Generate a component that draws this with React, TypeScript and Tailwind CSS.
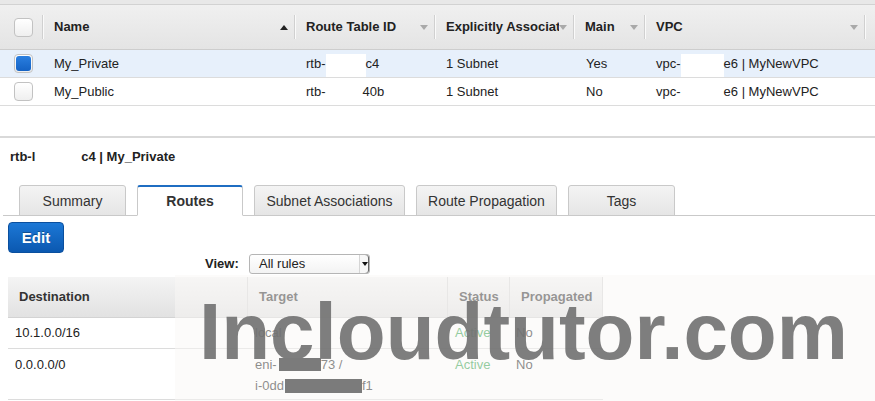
import React from 'react'

function Caret({ up = false }: { up?: boolean }) {
  return (
    <svg width="8" height="5" viewBox="0 0 8 5" className="shrink-0">
      <path d={up ? 'M0 5 L4 0 L8 5 Z' : 'M0 0 L8 0 L4 5 Z'} fill={up ? '#222222' : '#a9a9a9'} />
    </svg>
  )
}

function Checkbox({ checked = false }: { checked?: boolean }) {
  return (
    <span className="flex items-center justify-center w-[19px] h-[19px] rounded-[4px] border border-[#c2c2c2] bg-gradient-to-b from-white to-[#efefef]">
      {checked && <span className="w-[15px] h-[15px] rounded-[3px] bg-gradient-to-b from-[#2a7fe0] to-[#1462c4]" />}
    </span>
  )
}

const headCols = [
  { label: 'Name', w: 'w-[252px]', up: true },
  { label: 'Route Table ID', w: 'w-[140px]' },
  { label: 'Explicitly Associated With', w: 'w-[139px]' },
  { label: 'Main', w: 'w-[71px]' },
  { label: 'VPC', w: 'w-[220px]' },
]

function HeadCell({ label, w, up }: { label: string; w: string; up?: boolean }) {
  return (
    <div className={`${w} h-full flex items-center shrink-0`}>
      <span className="flex-1 min-w-0 pl-[11px] overflow-hidden whitespace-nowrap font-bold text-[#222]">{label}</span>
      <span className="mr-[6px] flex"><Caret up={up} /></span>
      <span className="w-px h-[24px] bg-[#d0d0d0] shadow-[1px_0_0_#fafafa]" />
    </div>
  )
}

function Redact({ w }: { w: string }) {
  return <span className={`${w} self-end h-[23px] bg-white`} />
}

function RtRow({ checked, name, id, main }: { checked?: boolean; name: string; id: string; main: string }) {
  return (
    <div className={`flex items-center h-[28px] border-b border-[#dcdcdc] ${checked ? 'bg-[#e7f0fb]' : 'bg-white'}`}>
      <div className="w-[43px] pl-[14px] flex items-center"><Checkbox checked={checked} /></div>
      <div className="w-[252px] pl-[11px]">{name}</div>
      <div className="w-[140px] pl-[11px] h-full flex items-center">
        <span>rtb-</span>
        <Redact w={checked ? 'w-[40px]' : 'w-[37px]'} />
        <span>{id}</span>
      </div>
      <div className="w-[139px] pl-[11px]">1 Subnet</div>
      <div className="w-[71px] pl-[12px]">{main}</div>
      <div className="w-[220px] pl-[11px] h-full flex items-center">
        <span>vpc-</span>
        <Redact w="w-[43px]" />
        <span>e6 | MyNewVPC</span>
      </div>
    </div>
  )
}

const tabs = [
  { label: 'Summary', w: 'w-[107px]' },
  { label: 'Routes', w: 'w-[106px]', active: true },
  { label: 'Subnet Associations', w: 'w-[151px]' },
  { label: 'Route Propagation', w: 'w-[141px]' },
  { label: 'Tags', w: 'w-[107px]' },
]

export default function App() {
  return (
    <div className="relative h-[401px] w-[875px] overflow-hidden bg-white text-[13px] leading-[16px] text-[#222] font-['Liberation_Sans',Arial,Helvetica,sans-serif]">
      {/* route tables list */}
      <div className="h-[5px] bg-[#e8e8e8] border-b border-[#d2d2d2]" />
      <div className="flex items-center h-[45px] bg-gradient-to-b from-[#f0f0f0] to-[#e4e4e4] border-b border-[#cdcdcd]">
        <div className="w-[43px] h-full flex items-center shrink-0">
          <span className="ml-[14px] flex-1 flex"><Checkbox /></span>
          <span className="w-px h-[24px] bg-[#d0d0d0] shadow-[1px_0_0_#fafafa]" />
        </div>
        {headCols.map(c => <HeadCell key={c.label} {...c} />)}
      </div>
      <RtRow checked name="My_Private" id="c4" main="Yes" />
      <RtRow name="My_Public" id="40b" main="No" />

      {/* details */}
      <div className="mt-[30px] h-[2px] bg-[#d9d9d9]" />
      <div className="mt-[11px] ml-[10px] flex font-bold">
        <span>rtb-l</span>
        <span className="w-[46px]" />
        <span>c4 | My_Private</span>
      </div>

      <div className="mt-[20px] ml-[3px] pl-[16px] flex items-end gap-[11px] border-b border-[#c9c9c9]">
        {tabs.map(t => (
          <div
            key={t.label}
            className={`${t.w} -mb-px h-[31px] flex items-center justify-center rounded-t-[3px] border text-[14px] text-[#333] ${
              t.active
                ? 'bg-white border-[#c9c9c9] border-t-2 border-t-[#1f6dc2] border-b-white font-bold'
                : 'bg-gradient-to-b from-[#f4f4f4] to-[#e5e5e5] border-[#c9c9c9]'
            }`}
          >
            {t.label}
          </div>
        ))}
      </div>

      <button className="mt-[6px] ml-[8px] w-[56px] h-[31px] rounded-[4px] bg-gradient-to-b from-[#1c78d6] to-[#0b58b0] border border-[#0a4f9e] text-white text-[15px] font-bold [text-shadow:0_-1px_0_rgba(0,0,0,0.3)] flex items-center justify-center">
        Edit
      </button>

      <div className="mt-px pl-[205px] flex items-center">
        <span className="font-bold w-[44px]">View:</span>
        <div className="w-[121px] h-[20px] rounded-[3px] border border-[#b5b5b5] bg-gradient-to-b from-white to-[#f3f3f3] flex items-center">
          <span className="flex-1 pl-[9px]">All rules</span>
          <span className="w-[10px] h-full border-l border-[#d5d5d5] flex items-center justify-center bg-[#f7f7f7] rounded-r-[3px] shadow-[inset_-1px_0_0_#666]">
            <svg width="6" height="4" viewBox="0 0 6 4"><path d="M0 0 L6 0 L3 4 Z" fill="#111" /></svg>
          </span>
        </div>
      </div>

      {/* routes table */}
      <div className="mt-[3px] ml-[8px] w-[595px]">
        <div className="flex h-[41px] bg-gradient-to-b from-[#f4f4f4] to-[#e2e2e2] border-b border-[#d3d3d3] font-bold text-[#333]">
          <div className="w-[240px] pl-[11px] flex items-center border-r border-[#d6d6d6]">Destination</div>
          <div className="w-[200px] pl-[11px] flex items-center border-r border-[#d6d6d6]">Target</div>
          <div className="w-[62px] pl-[11px] flex items-center border-r border-[#d6d6d6]">Status</div>
          <div className="w-[93px] pl-[11px] flex items-center border-r border-[#d6d6d6]">Propagated</div>
        </div>
        <div className="flex h-[31px] items-center border-b border-[#dcdcdc]">
          <div className="w-[240px] pl-[7px]">10.1.0.0/16</div>
          <div className="w-[200px] pl-[7px]">local</div>
          <div className="w-[62px] pl-[7px] text-[#2ea04a]">Active</div>
          <div className="w-[93px] pl-[6px]">No</div>
        </div>
        <div className="flex h-[51px] pt-[5px] border-b border-[#dcdcdc] leading-[21px]">
          <div className="w-[240px] pl-[7px]">0.0.0.0/0</div>
          <div className="w-[200px] pl-[7px] flex flex-col">
            <div className="flex items-center">
              <span>eni-</span>
              <span className="relative z-20 ml-[2px] w-[42px] h-[13px] bg-[#7b7b7b]" />
              <span>73 /</span>
            </div>
            <div className="flex items-center">
              <span>i-0dd</span>
              <span className="relative z-20 ml-px w-[77px] h-[14px] bg-[#7b7b7b]" />
              <span>f1</span>
            </div>
          </div>
          <div className="w-[62px] pl-[7px] text-[#2ea04a]">Active</div>
          <div className="w-[93px] pl-[6px]">No</div>
        </div>
      </div>

      {/* watermark */}
      <div className="absolute left-[175px] top-[275px] w-[700px] h-[126px] z-10 bg-[rgba(249,248,245,0.5)] pl-[24px] pt-[17px]">
        <div className="text-[80px] leading-[80px] font-bold text-[rgba(112,112,112,0.9)] whitespace-nowrap">
          Incloudtutor.com
        </div>
      </div>
    </div>
  )
}
